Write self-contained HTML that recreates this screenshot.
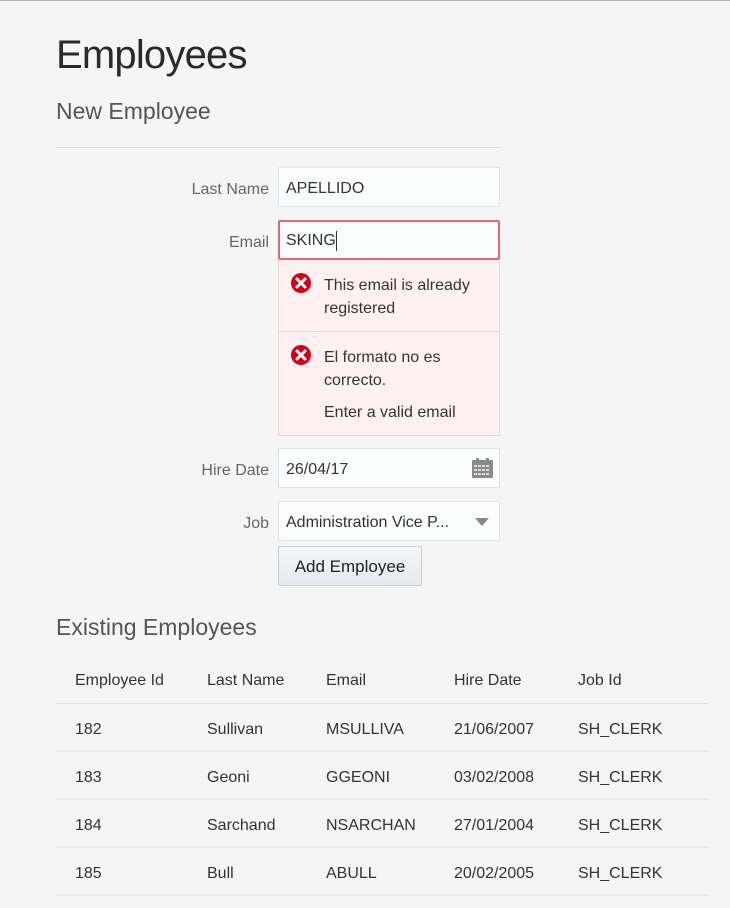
<!DOCTYPE html>
<html><head><meta charset="utf-8"><style>
*{box-sizing:border-box;margin:0;padding:0}
body{width:730px;height:908px;background:#f5f5f5;font-family:"Liberation Sans",sans-serif;color:#333;position:relative;overflow:hidden}
.a{position:absolute;white-space:nowrap}
.lbl{position:absolute;right:461px;font-size:16px;color:#666;line-height:20px;margin-top:1px}
.inp{position:absolute;left:278px;width:222px;height:40px;background:#fcfdfe;border:1px solid #dfe4e8;border-radius:2px;font-size:16px;line-height:41px;padding-left:7px;color:#333}
.row{position:absolute;left:56px;width:651px;height:1px;background:#e3e3e3}
.c{position:absolute;font-size:16px;line-height:20px;color:#333;margin-top:2px}
.et{position:absolute;left:324px;font-size:16px;line-height:23px;color:#333;margin-top:1px}
</style></head><body>
<div class="a" style="left:0;top:0;width:730px;height:1px;background:#b5b5b5"></div>
<div class="a" style="left:56px;top:33px;font-size:40px;font-weight:300;color:#2a2a2a;letter-spacing:-0.8px">Employees</div>
<div class="a" style="left:56px;top:98px;font-size:23px;color:#555">New Employee</div>
<div class="a" style="left:56px;top:147px;width:444px;height:1px;background:#dcdfe3"></div>

<div class="lbl" style="top:179px">Last Name</div>
<div class="inp" style="top:167px">APELLIDO</div>
<div class="lbl" style="top:232px">Email</div>
<div class="inp" style="top:220px;border:2px solid #de6b6b;padding-left:6px;line-height:38px">SKING<span style="display:inline-block;width:1px;height:20px;background:#333;vertical-align:middle"></span></div>
<div class="a" style="left:278px;top:260px;width:222px;height:176px;background:#fff1f1;border:1px solid #f5d4d4;border-top:none"></div>
<div class="a" style="left:279px;top:331px;width:220px;height:1px;background:#f5d4d4"></div>
<svg class="a" style="left:291px;top:273px" width="20" height="20" viewBox="0 0 20 20"><circle cx="10" cy="10" r="10" fill="#d0021b"/><path d="M6 6L14 14M14 6L6 14" stroke="#fff" stroke-width="3" stroke-linecap="round"/></svg>
<div class="et" style="top:273px">This email is already<br>registered</div>
<svg class="a" style="left:291px;top:345px" width="20" height="20" viewBox="0 0 20 20"><circle cx="10" cy="10" r="10" fill="#d0021b"/><path d="M6 6L14 14M14 6L6 14" stroke="#fff" stroke-width="3" stroke-linecap="round"/></svg>
<div class="et" style="top:345px">El formato no es<br>correcto.</div>
<div class="et" style="top:400px">Enter a valid email</div>

<div class="lbl" style="top:460px">Hire Date</div>
<div class="inp" style="top:448px">26/04/17</div>
<svg class="a" style="left:472px;top:458px" width="21" height="20" viewBox="0 0 21 20"><rect x="0" y="2" width="21" height="18" rx="1" fill="#8a8a8a"/><rect x="4" y="0" width="3" height="4" fill="#8a8a8a"/><rect x="14" y="0" width="3" height="4" fill="#8a8a8a"/><g fill="#ddd"><rect x="2" y="7" width="3" height="2"/><rect x="6" y="7" width="3" height="2"/><rect x="10" y="7" width="3" height="2"/><rect x="14" y="7" width="3" height="2"/><rect x="2" y="11" width="3" height="2"/><rect x="6" y="11" width="3" height="2"/><rect x="10" y="11" width="3" height="2"/><rect x="14" y="11" width="3" height="2"/><rect x="2" y="15" width="3" height="2"/><rect x="6" y="15" width="3" height="2"/><rect x="10" y="15" width="3" height="2"/><rect x="14" y="15" width="3" height="2"/></g></svg>
<div class="lbl" style="top:513px">Job</div>
<div class="inp" style="top:501px">Administration Vice P...</div>
<div class="a" style="left:475px;top:518px;width:0;height:0;border-left:7px solid transparent;border-right:7px solid transparent;border-top:8px solid #888"></div>
<div class="a" style="left:278px;top:546px;width:144px;height:40px;background:linear-gradient(#f4f6f7,#e6eaed);border:1px solid #c4ced7;border-radius:2px;font-size:17px;line-height:40px;text-align:center;color:#222">Add Employee</div>

<div class="a" style="left:56px;top:614px;font-size:23px;color:#555">Existing Employees</div>
<div class="c" style="left:75px;top:669px">Employee Id</div>
<div class="c" style="left:207px;top:669px">Last Name</div>
<div class="c" style="left:326px;top:669px">Email</div>
<div class="c" style="left:454px;top:669px">Hire Date</div>
<div class="c" style="left:578px;top:669px">Job Id</div>
<div class="row" style="top:703px;background:#dfdfdf"></div>

<div class="c" style="left:75px;top:718px">182</div><div class="c" style="left:207px;top:718px">Sullivan</div><div class="c" style="left:326px;top:718px">MSULLIVA</div><div class="c" style="left:454px;top:718px">21/06/2007</div><div class="c" style="left:578px;top:718px">SH_CLERK</div>
<div class="row" style="top:751px"></div>
<div class="c" style="left:75px;top:766px">183</div><div class="c" style="left:207px;top:766px">Geoni</div><div class="c" style="left:326px;top:766px">GGEONI</div><div class="c" style="left:454px;top:766px">03/02/2008</div><div class="c" style="left:578px;top:766px">SH_CLERK</div>
<div class="row" style="top:799px"></div>
<div class="c" style="left:75px;top:814px">184</div><div class="c" style="left:207px;top:814px">Sarchand</div><div class="c" style="left:326px;top:814px">NSARCHAN</div><div class="c" style="left:454px;top:814px">27/01/2004</div><div class="c" style="left:578px;top:814px">SH_CLERK</div>
<div class="row" style="top:847px"></div>
<div class="c" style="left:75px;top:862px">185</div><div class="c" style="left:207px;top:862px">Bull</div><div class="c" style="left:326px;top:862px">ABULL</div><div class="c" style="left:454px;top:862px">20/02/2005</div><div class="c" style="left:578px;top:862px">SH_CLERK</div>
<div class="row" style="top:895px"></div>
</body></html>
